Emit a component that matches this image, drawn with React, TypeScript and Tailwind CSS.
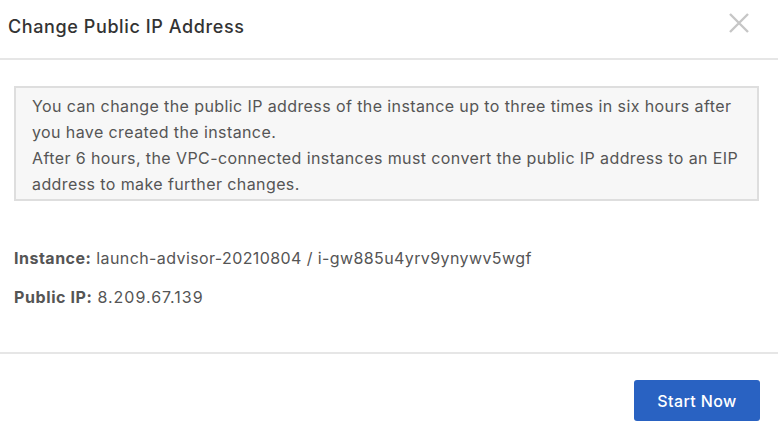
export default function App() {
  return (
    <div className="w-[778px] h-[444px] bg-white flex flex-col font-['Inter','Liberation_Sans',sans-serif] text-[#333]">
      {/* Header */}
      <div className="h-[60px] flex items-start justify-between pl-2 pr-[28px] border-b-2 border-[#e6e6e6] shrink-0">
        <h1 className="mt-[15px] text-[18px] leading-[24px] font-medium tracking-[0.6px] text-[#333]">Change Public IP Address</h1>
        <svg width="22" height="22" viewBox="0 0 22 22" className="mt-[12px]">
          <path d="M2 2 L20 20 M20 2 L2 20" stroke="#c6c6c6" strokeWidth="2.4" fill="none" />
        </svg>
      </div>

      {/* Body */}
      <div className="flex-1 pt-[26px] pl-[14px]">
        <div className="w-[745px] border-2 border-[#dedede] bg-[#f7f7f7] pl-4 pr-3 pt-[5px] pb-[2px] text-[16px] leading-[26px] tracking-[0.4px] text-[#555]">
          <p>
            You can change the public IP address of the instance up to three times in six hours after you have created the instance.
          </p>
          <p>
            After 6 hours, the VPC-connected instances must convert the public IP address to an EIP address to make further changes.
          </p>
        </div>

        <div className="mt-[44px] flex flex-col gap-[13px] text-[16px] leading-[26px] tracking-[0.4px] text-[#555]">
          <div>
            <span className="font-bold tracking-[0.5px]">Instance:</span> launch-advisor-20210804 / i-gw885u4yrv9ynywv5wgf
          </div>
          <div>
            <span className="font-bold tracking-[0.6px]">Public IP:</span> <span className="tracking-[1px]">8.209.67.139</span>
          </div>
        </div>
      </div>

      {/* Footer */}
      <div className="h-[92px] border-t-2 border-[#e6e6e6] flex justify-end items-start pt-[26px] pr-[18px] shrink-0">
        <button className="w-[126px] h-[41px] rounded-[3px] bg-[#2962c2] text-white text-[16px] font-medium tracking-[0.4px]">
          Start Now
        </button>
      </div>
    </div>
  );
}
